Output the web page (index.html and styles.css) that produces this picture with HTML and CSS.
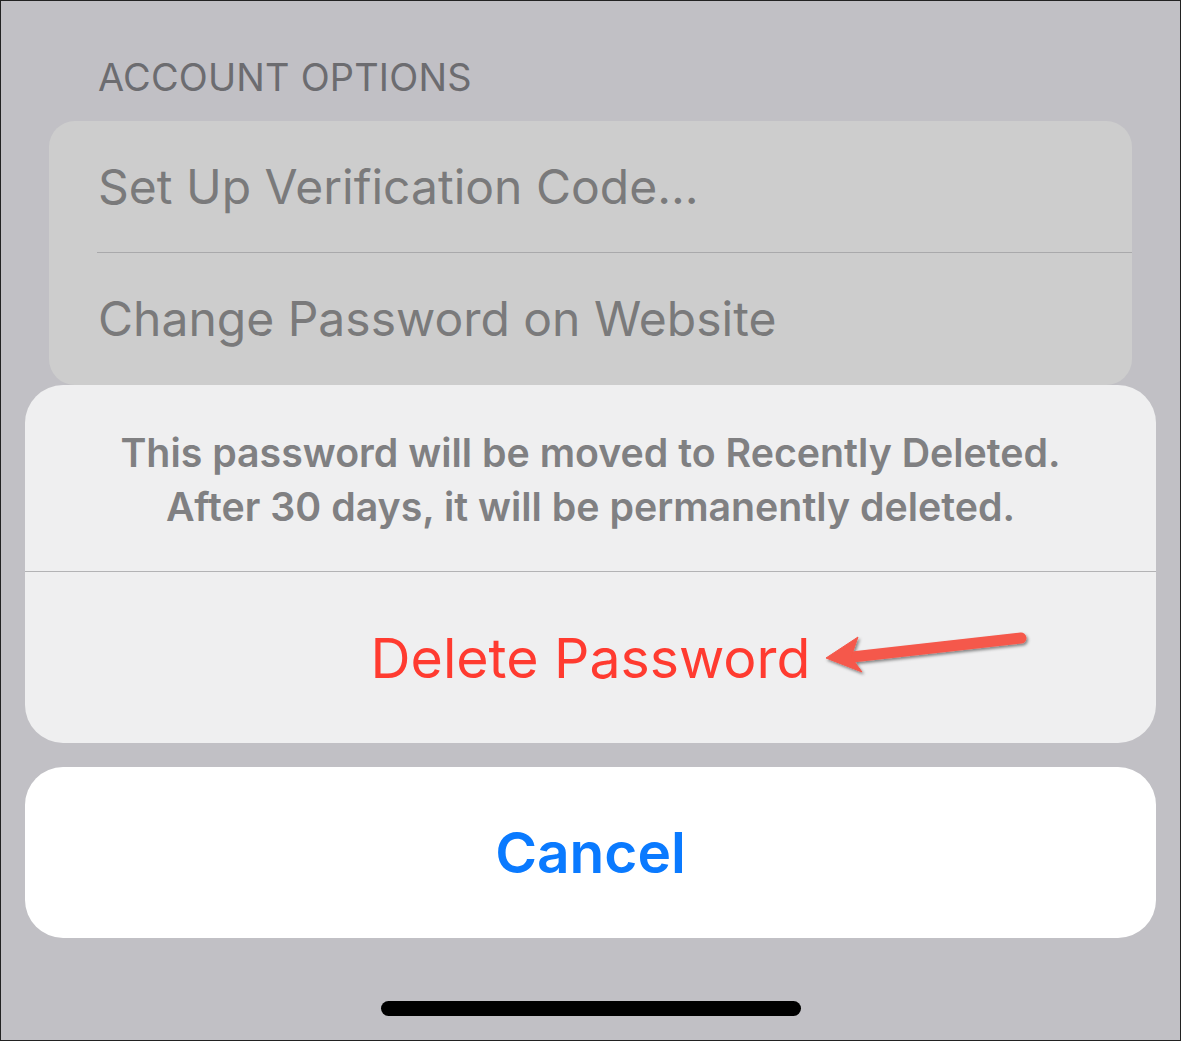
FILE: index.html
```html
<!DOCTYPE html>
<html lang="en">
<head>
<meta charset="utf-8">
<title>Delete Password</title>
<link rel="stylesheet" href="styles.css">
</head>
<body>
<div class="frame">
  <div class="section-label">ACCOUNT OPTIONS</div>
  <div class="card">
    <div class="row">Set Up Verification Code...</div>
    <div class="divider inset"></div>
    <div class="row">Change Password on Website</div>
  </div>
  <div class="alert">
    <div class="message">This password will be moved to Recently Deleted.<br>After 30 days, it will be permanently deleted.</div>
    <div class="divider"></div>
    <div class="action destructive">Delete Password</div>
  </div>
  <div class="cancel">Cancel</div>
  <div class="home-indicator"></div>
  <svg class="annotation" viewBox="0 0 1181 1041" width="1181" height="1041" aria-hidden="true">
    <defs>
      <filter id="shadow" x="-10%" y="-50%" width="120%" height="200%">
        <feDropShadow dx="1.5" dy="2" stdDeviation="1.6" flood-color="#000" flood-opacity="0.45"/>
      </filter>
    </defs>
    <g filter="url(#shadow)" fill="#f5584b" stroke="#f5584b">
      <line x1="1021" y1="638" x2="852" y2="657" stroke-width="11" stroke-linecap="round"/>
      <polygon points="826,658 858,637 851,657 862,672" stroke-width="1" stroke-linejoin="round"/>
    </g>
  </svg>
</div>
</body>
</html>
```

FILE: styles.css
```css
* { box-sizing: border-box; }

html, body {
  margin: 0;
  padding: 0;
  background: #c1c0c5;
}

.frame {
  position: relative;
  width: 1181px;
  height: 1041px;
  border: 1px solid #222;
  background: #c1c0c5;
  font-family: Inter, "Liberation Sans", sans-serif;
  overflow: hidden;
  padding-top: 57px;
}

.section-label {
  margin-left: 97px;
  height: 38px;
  line-height: 38px;
  font-size: 37.9px;
  color: #6c6c70;
  letter-spacing: 0.2px;
}

.card {
  margin: 25px 48px 0;
  background: #cdcdcd;
  border-radius: 26px;
  height: 264px;
  display: flex;
  flex-direction: column;
}

.row {
  height: 131px;
  display: flex;
  align-items: center;
  padding-left: 49px;
  font-size: 48px;
  color: #7a7a7b;
}

.divider {
  height: 1px;
  background: #b3b3b5;
  flex: none;
}

.divider.inset {
  margin-left: 48px;
  background: #a9a9ab;
}

.alert {
  margin: 0 24px;
  background: #efeff0;
  border-radius: 38px;
  overflow: hidden;
}

.message {
  height: 186px;
  padding-top: 41px;
  text-align: center;
  font-size: 39.3px;
  line-height: 54px;
  font-weight: 600;
  color: #808082;
}

.action {
  height: 171px;
  display: flex;
  align-items: center;
  justify-content: center;
  font-size: 55.4px;
}

.destructive {
  color: #ff3b30;
}

.cancel {
  margin: 24px 24px 0;
  height: 171px;
  background: #ffffff;
  border-radius: 38px;
  display: flex;
  align-items: center;
  justify-content: center;
  font-size: 56.8px;
  font-weight: 600;
  color: #0a7aff;
}

.home-indicator {
  margin: 63px auto 0;
  width: 420px;
  height: 15px;
  border-radius: 8px;
  background: #000;
}

.annotation {
  position: absolute;
  left: -1px;
  top: -1px;
  pointer-events: none;
}
```
